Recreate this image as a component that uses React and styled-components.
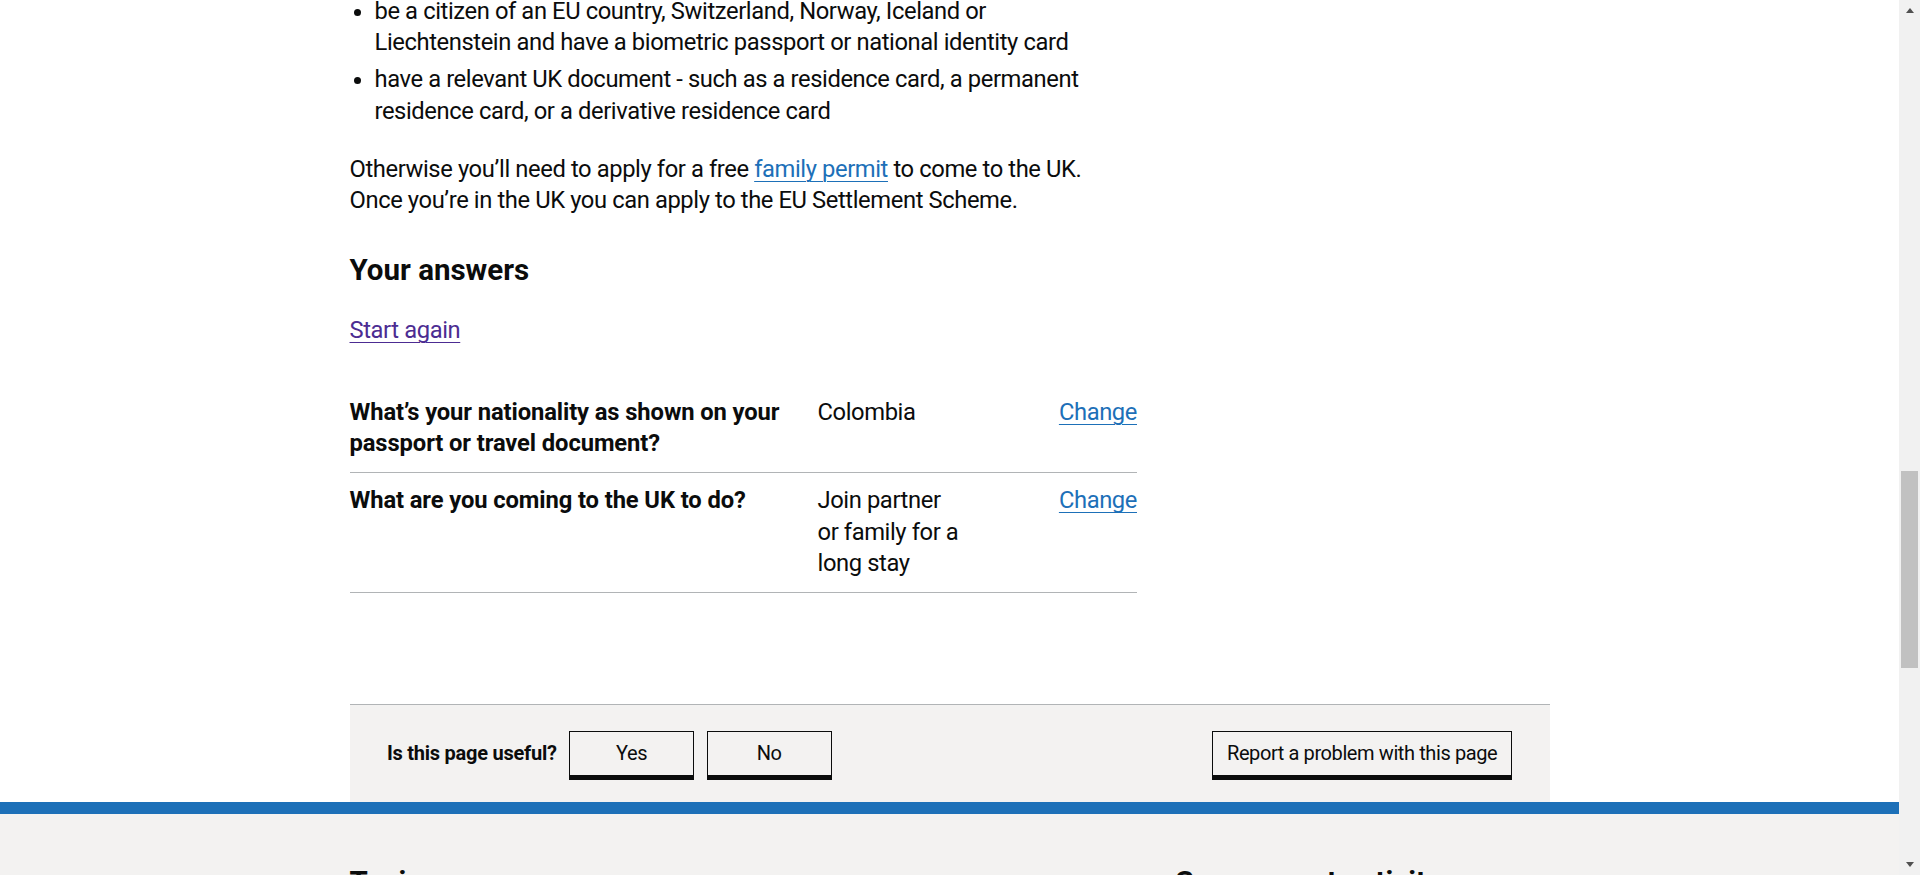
import React from "react";
import styled, { createGlobalStyle } from "styled-components";

const answers = [
  {
    question: ["What’s your nationality as shown on your", "passport or travel document?"],
    answer: ["Colombia"],
  },
  {
    question: ["What are you coming to the UK to do?"],
    answer: ["Join partner", "or family for a", "long stay"],
  },
];

function Lines({ lines }) {
  return lines.map((line, i) => (
    <React.Fragment key={i}>
      {i > 0 && <br />}
      {line}
    </React.Fragment>
  ));
}

export default function App() {
  return (
    <>
      <GlobalStyle />
      <Window>
        <Viewport>
          <Container>
            <Main>
              <BulletList>
                <li>
                  be a citizen of an EU country, Switzerland, Norway, Iceland or
                  <br />
                  Liechtenstein and have a biometric passport or national identity card
                </li>
                <li>
                  have a relevant UK document - such as a residence card, a permanent
                  <br />
                  residence card, or a derivative residence card
                </li>
              </BulletList>
              <Body>
                Otherwise you’ll need to apply for a free <Link href="#">family permit</Link> to
                come to the UK.
                <br />
                Once you’re in the UK you can apply to the EU Settlement Scheme.
              </Body>
              <HeadingM>Your answers</HeadingM>
              <Body $gap="38px">
                <Link href="#" $visited>
                  Start again
                </Link>
              </Body>
              <SummaryList>
                {answers.map((row, i) => (
                  <SummaryRow key={i}>
                    <Key>
                      <Lines lines={row.question} />
                    </Key>
                    <Value>
                      <Lines lines={row.answer} />
                    </Value>
                    <Actions>
                      <Link href="#">Change</Link>
                    </Actions>
                  </SummaryRow>
                ))}
              </SummaryList>
            </Main>
            <Feedback>
              <Prompt>
                <PromptText>Is this page useful?</PromptText>
                <FeedbackButton $wide>Yes</FeedbackButton>
                <FeedbackButton $wide>No</FeedbackButton>
              </Prompt>
              <FeedbackButton>Report a problem with this page</FeedbackButton>
            </Feedback>
          </Container>
          <Footer>
            <FooterContainer>
              <FooterSection>
                <FooterHeading>Topics</FooterHeading>
              </FooterSection>
              <FooterSection>
                <FooterHeading>Government activity</FooterHeading>
              </FooterSection>
            </FooterContainer>
          </Footer>
        </Viewport>
        <Scrollbar>
          <ScrollArrow>
            <Triangle $up />
          </ScrollArrow>
          <Track>
            <Thumb />
          </Track>
          <ScrollArrow>
            <Triangle />
          </ScrollArrow>
        </Scrollbar>
      </Window>
    </>
  );
}

// Styled components
const GlobalStyle = createGlobalStyle`
  html, body {
    margin: 0;
    height: 100%;
    overflow: hidden;
    background: #fff;
  }
  body {
    font-family: Roboto, "Liberation Sans", Arial, sans-serif;
    color: #0b0c0c;
  }
`;

const Window = styled.div`
  display: flex;
  height: 100vh;
`;

const Viewport = styled.div`
  flex: 1;
  overflow: hidden;
`;

const Container = styled.div`
  width: 1200px;
  margin: 0 auto;
`;

const Main = styled.main`
  display: flex;
  flex-direction: column;
  width: 787.5px;
  padding-bottom: 111.5px;
`;

const text = `
  font-size: 23.75px;
  line-height: 31.25px;
  letter-spacing: -0.4px;
`;

const BulletList = styled.ul`
  ${text}
  margin: -4.3px 0 21px;
  padding-left: 25px;
  list-style: disc;
  li {
    margin-bottom: 6.25px;
  }
`;

const Body = styled.p`
  ${text}
  margin: 0 0 ${(p) => p.$gap || "25px"};
`;

const Link = styled.a`
  color: ${(p) => (p.$visited ? "#4c2c92" : "#1d70b8")};
  text-decoration: underline;
  text-decoration-thickness: 1.25px;
  text-underline-offset: 0.16em;
`;

const HeadingM = styled.h2`
  font-size: 29.5px;
  line-height: 37.5px;
  font-weight: 700;
  margin: 10px 0 26px;
`;

const SummaryList = styled.dl`
  ${text}
  margin: 0;
`;

const SummaryRow = styled.div`
  display: grid;
  grid-template-columns: 468px 171px 1fr;
  border-bottom: 1px solid #b1b4b6;
`;

const Cell = styled.dd`
  margin: 0;
  padding: 12.5px 25px 12.5px 0;
`;

const Key = styled(Cell).attrs({ as: "dt" })`
  font-weight: 700;
  letter-spacing: -0.1px;
`;

const Value = styled(Cell)``;

const Actions = styled(Cell)`
  padding-right: 0;
  text-align: right;
`;

const Feedback = styled.div`
  display: flex;
  align-items: center;
  justify-content: space-between;
  padding: 25.5px 37.5px 26.5px;
  border-top: 1px solid #b1b4b6;
  background: #f3f2f1;
`;

const Prompt = styled.div`
  display: flex;
  align-items: center;
  gap: 12.5px;
`;

const PromptText = styled.h2`
  margin: 0;
  font-size: 20px;
  line-height: 25px;
  font-weight: 700;
  letter-spacing: -0.25px;
`;

const FeedbackButton = styled.button`
  box-sizing: border-box;
  height: 45px;
  min-width: ${(p) => (p.$wide ? "125px" : "0")};
  padding: 1px 13.75px 0;
  border: 1px solid #0b0c0c;
  border-radius: 0;
  background: #f3f2f1;
  box-shadow: 0 4px 0 #0b0c0c;
  color: #0b0c0c;
  font-family: inherit;
  font-size: 20px;
  line-height: 25px;
  letter-spacing: -0.4px;
  cursor: pointer;
`;

const Footer = styled.footer`
  padding-top: 50px;
  border-top: 12.5px solid #1d70b8;
  background: #f3f2f1;
  min-height: 400px;
`;

const FooterContainer = styled.div`
  width: 1200px;
  margin: 0 auto;
  display: grid;
  grid-template-columns: 825px 1fr;
`;

const FooterSection = styled.div``;

const FooterHeading = styled.h2`
  margin: 0 0 37.5px;
  padding-bottom: 25px;
  border-bottom: 1px solid #b1b4b6;
  font-size: 29.5px;
  line-height: 37.5px;
  font-weight: 700;
`;

const Scrollbar = styled.div`
  display: flex;
  flex-direction: column;
  width: 21px;
  background: #f1f1f1;
`;

const ScrollArrow = styled.div`
  height: 21px;
  display: flex;
  align-items: center;
  justify-content: center;
`;

const Triangle = styled.span`
  width: 0;
  height: 0;
  border-left: 4.5px solid transparent;
  border-right: 4.5px solid transparent;
  ${(p) =>
    p.$up ? "border-bottom: 5px solid #505050;" : "border-top: 5px solid #505050;"}
`;

const Track = styled.div`
  flex: 1;
  padding: 0 2px;
`;

const Thumb = styled.div`
  margin-top: 450px;
  height: 197px;
  background: #c1c1c1;
`;
